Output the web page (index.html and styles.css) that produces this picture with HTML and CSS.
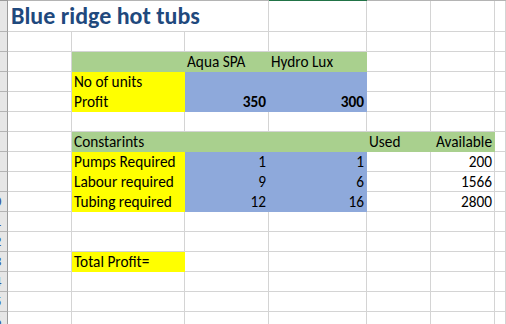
FILE: index.html
```html
<!DOCTYPE html>
<html>
<head>
<meta charset="utf-8">
<link rel="stylesheet" href="styles.css">
</head>
<body>
<div class="sheet">
  <div class="top hd"></div><div class="top"></div><div class="top"></div><div class="top"></div><div class="top sel"></div><div class="top"></div><div class="top"></div><div class="top"></div>

  <div class="h"><span>1</span></div><div class="c title">Blue ridge hot tubs</div><div class="c"></div><div class="c"></div><div class="c"></div><div class="c"></div>

  <div class="h"><span>2</span></div><div class="c"></div><div class="c"></div><div class="c"></div><div class="c"></div><div class="c"></div><div class="c"></div><div class="c"></div>

  <div class="h"><span>3</span></div><div class="c"></div><div class="c g"></div><div class="c g">Aqua SPA</div><div class="c g">Hydro Lux</div><div class="c"></div><div class="c"></div><div class="c"></div>

  <div class="h"><span>4</span></div><div class="c"></div><div class="c y">No of units</div><div class="c b"></div><div class="c b"></div><div class="c"></div><div class="c"></div><div class="c"></div>

  <div class="h"><span>5</span></div><div class="c"></div><div class="c y">Profit</div><div class="c b n bold">350</div><div class="c b n bold">300</div><div class="c"></div><div class="c"></div><div class="c"></div>

  <div class="h"><span>6</span></div><div class="c"></div><div class="c"></div><div class="c"></div><div class="c"></div><div class="c"></div><div class="c"></div><div class="c"></div>

  <div class="h"><span>7</span></div><div class="c"></div><div class="c g span3">Constarints</div><div class="c g">Used</div><div class="c g n">Available</div><div class="c"></div>

  <div class="h"><span>8</span></div><div class="c"></div><div class="c y">Pumps Required</div><div class="c b n">1</div><div class="c b n">1</div><div class="c"></div><div class="c n">200</div><div class="c"></div>

  <div class="h"><span>9</span></div><div class="c"></div><div class="c y">Labour required</div><div class="c b n">9</div><div class="c b n">6</div><div class="c"></div><div class="c n">1566</div><div class="c"></div>

  <div class="h"><span>10</span></div><div class="c"></div><div class="c y">Tubing required</div><div class="c b n">12</div><div class="c b n">16</div><div class="c"></div><div class="c n">2800</div><div class="c"></div>

  <div class="h"><span>11</span></div><div class="c"></div><div class="c"></div><div class="c"></div><div class="c"></div><div class="c"></div><div class="c"></div><div class="c"></div>

  <div class="h"><span>12</span></div><div class="c"></div><div class="c"></div><div class="c"></div><div class="c"></div><div class="c"></div><div class="c"></div><div class="c"></div>

  <div class="h"><span>13</span></div><div class="c"></div><div class="c y">Total Profit=</div><div class="c"></div><div class="c"></div><div class="c"></div><div class="c"></div><div class="c"></div>

  <div class="h"><span>14</span></div><div class="c"></div><div class="c"></div><div class="c"></div><div class="c"></div><div class="c"></div><div class="c"></div><div class="c"></div>

  <div class="h"><span>15</span></div><div class="c"></div><div class="c"></div><div class="c"></div><div class="c"></div><div class="c"></div><div class="c"></div><div class="c"></div>

  <div class="h"><span>16</span></div><div class="c"></div><div class="c"></div><div class="c"></div><div class="c"></div><div class="c"></div><div class="c"></div><div class="c"></div>
</div>
</body>
</html>
```
FILE: styles.css
```css
html, body {
  margin: 0;
  padding: 0;
  background: #ffffff;
}
body {
  width: 506px;
  height: 324px;
  overflow: hidden;
  font-family: Carlito, Lato, "Liberation Sans", sans-serif;
  font-size: 15.3px;
  color: #000000;
}
.sheet {
  display: grid;
  width: 506px;
  grid-template-columns: 8px 64px 113px 84px 98px 64px 64px 1fr;
  grid-template-rows: 1px 31px repeat(15, 20px);
}
.top {
  background: #b4b4b4;
}
.top.hd {
  background: #9b9b9b;
}
.top.sel {
  background: #217346;
}
.h {
  background: #e6e6e6;
  border-right: 1px solid #9b9b9b;
  border-bottom: 1px solid #b4b4b4;
  overflow: hidden;
  line-height: 19px;
  font-size: 14.67px;
}
.h span {
  display: block;
  width: 26px;
  margin-left: -19px;
  text-align: center;
  color: #2f5597;
}
.c {
  border-right: 1px solid #d4d4d4;
  border-bottom: 1px solid #d4d4d4;
  padding: 0 2px;
  line-height: 19px;
  white-space: nowrap;
  min-width: 0;
}
.title {
  grid-column: span 3;
  font-size: 24px;
  font-weight: bold;
  color: #1f497d;
  line-height: 30px;
  padding-left: 3px;
}
.span3 {
  grid-column: span 3;
}
.g {
  background: #a9d08e;
  border-color: #a9d08e;
}
.y {
  background: #ffff00;
  border-color: #ffff00;
}
.b {
  background: #8ea9db;
  border-color: #8ea9db;
}
.n {
  text-align: right;
  padding-right: 2px;
}
.bold {
  font-weight: bold;
}
```
